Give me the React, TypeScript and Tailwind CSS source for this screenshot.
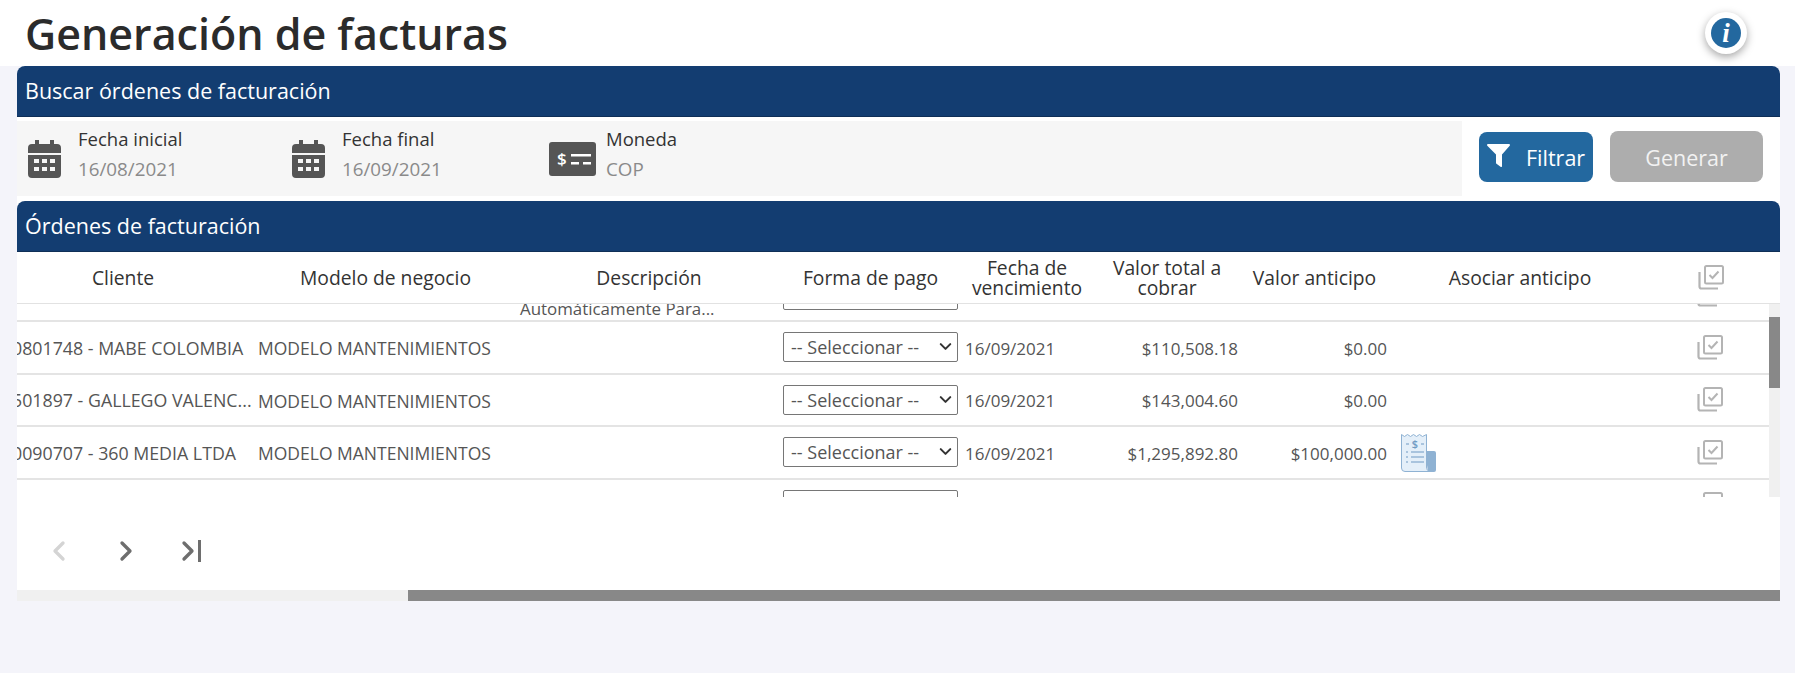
import React from 'react';
import { ChevronDown, ChevronLeft, ChevronRight } from 'lucide-react';

const gridCols = 'grid grid-cols-[235px_263px_268px_175px_138px_142px_149px_266px_116px]';

interface Row {
  client: string;
  model: string;
  description?: string;
  total: string;
  advance: string;
  hasReceipt?: boolean;
}

const rows: Row[] = [
  { client: '', model: '', description: 'Automáticamente Para...', total: '', advance: '' },
  { client: '0801748 - MABE COLOMBIA', model: 'MODELO MANTENIMIENTOS', total: '$110,508.18', advance: '$0.00' },
  { client: '501897 - GALLEGO VALENC...', model: 'MODELO MANTENIMIENTOS', total: '$143,004.60', advance: '$0.00' },
  { client: '0090707 - 360 MEDIA LTDA', model: 'MODELO MANTENIMIENTOS', total: '$1,295,892.80', advance: '$100,000.00', hasReceipt: true },
  { client: '', model: '', total: '', advance: '' },
];

const CalendarIcon = () => (
  <svg width="33" height="38" viewBox="0 0 33 38" className="shrink-0">
    <path fill="#555" d="M7 0h4v4h11V0h4v4h3a4 4 0 0 1 4 4v5H0V8a4 4 0 0 1 4-4h3z" />
    <path
      fill="#555"
      fillRule="evenodd"
      d="M0 15h33v19a4 4 0 0 1-4 4H4a4 4 0 0 1-4-4zM6 19v4h5v-4zm8 0v4h5v-4zm8 0v4h5v-4zM6 27v4h5v-4zm8 0v4h5v-4zm8 0v4h5v-4z"
    />
  </svg>
);

const MoneyIcon = () => (
  <svg width="47" height="34" viewBox="0 0 47 34" className="shrink-0">
    <rect width="47" height="34" rx="3" fill="#555" />
    <text x="8" y="23" fontSize="17" fontWeight="600" fill="#fff" fontFamily="'Open Sans', sans-serif">
      $
    </text>
    <rect x="22" y="12" width="20" height="2.5" fill="#fff" />
    <rect x="22" y="20" width="8" height="2.5" fill="#fff" />
    <rect x="34" y="20" width="8" height="2.5" fill="#fff" />
  </svg>
);

const FilterIcon = () => (
  <svg width="23" height="23" viewBox="0 0 23 23" className="shrink-0 -mt-[2px]">
    <path fill="#fff" d="M1 0h21a1 1 0 0 1 .7 1.7L15 10.5V22a1 1 0 0 1-1.5.8l-4-3a1 1 0 0 1-.5-.8v-8.5L.3 1.7A1 1 0 0 1 1 0z" />
  </svg>
);

const MultiCheckIcon = () => (
  <svg width="26" height="25" viewBox="0 0 26 25" fill="none" stroke="#b4b4b4" className="block">
    <rect x="7" y="1" width="18" height="17.5" rx="1.5" strokeWidth="2" />
    <path d="M11.5 10l3 3 6-6.5" strokeWidth="2" />
    <path d="M1.5 7v14.5a2 2 0 0 0 2 2H20" strokeWidth="2.2" />
  </svg>
);

const ReceiptIcon = () => (
  <svg width="35" height="39" viewBox="0 0 35 39" className="block">
    <path fill="#8fb2d3" d="M24 18h9a2 2 0 0 1 2 2v17a2 2 0 0 1-2 2h-6z" />
    <path
      fill="#e4eff9"
      stroke="#8fb2d3"
      strokeWidth="1"
      d="M.5 1.5l3 2 3-2 3 2 3-2 3 2 3-2 3 2 4-2V34c0 2 1 4 3 4.5H4a3.5 3.5 0 0 1-3.5-3.5z"
    />
    <text x="14" y="15" textAnchor="middle" fontSize="11" fontWeight="600" fill="#6f9ac3" fontFamily="'Open Sans', sans-serif">
      $
    </text>
    <path stroke="#6f9ac3" strokeWidth="1.2" d="M5 11h3M20 11h3M10 19h13M10 24h13M10 29h13" />
    <path stroke="#6f9ac3" strokeWidth="1.2" d="M5 19h2M5 24h2M5 29h2" />
  </svg>
);

const SectionBar = ({ title }: { title: string }) => (
  <div className="h-[51px] flex items-center px-2 bg-[#133d71] rounded-t-lg text-white text-[21.5px] border-b border-[#0f2f57]">
    {title}
  </div>
);

const FilterField = ({ icon, label, value, className }: { icon: React.ReactNode; label: string; value: string; className: string }) => (
  <div className={`flex items-center ${className}`}>
    {icon}
    <div className="flex flex-col leading-[30px] pb-[9px]">
      <span className="text-[18.5px] text-[#333]">{label}</span>
      <span className="text-[18.8px] text-[#8a8a8a]">{value}</span>
    </div>
  </div>
);

const HeaderCell = ({ children, className = '' }: { children: React.ReactNode; className?: string }) => (
  <div className={`flex items-center justify-center text-center text-[19.3px] leading-[20px] font-medium text-[#333] ${className}`}>{children}</div>
);

const App = () => {
  return (
    <div className="h-[673px] overflow-hidden bg-[#f4f4fa] text-[17.5px] font-['Open_Sans',sans-serif]">
      <header className="h-[66px] bg-white flex items-center justify-between pl-[25px] pr-[48px]">
        <h1 className="text-[43px] font-semibold text-[#2b2b2b] leading-none">Generación de facturas</h1>
        <button className="w-[42px] h-[42px] rounded-full bg-white shadow-[0_3px_8px_rgba(0,0,0,0.35)] flex items-center justify-center">
          <span className="w-[30px] h-[30px] rounded-full bg-[#23689f] flex items-center justify-center text-white text-[27px] font-bold italic font-['Liberation_Serif',serif] leading-none">
            i
          </span>
        </button>
      </header>

      <main className="mx-[17px] w-[1763px] bg-white rounded-t-lg">
        <SectionBar title="Buscar órdenes de facturación" />
        <div className="h-[79px] flex">
          <div className="w-[1445px] h-[75px] mt-[4px] bg-[#f6f6f6] flex items-center pl-[11px]">
            <FilterField icon={<CalendarIcon />} label="Fecha inicial" value="16/08/2021" className="w-[264px] gap-[17px]" />
            <FilterField icon={<CalendarIcon />} label="Fecha final" value="16/09/2021" className="w-[257px] gap-[17px]" />
            <FilterField icon={<MoneyIcon />} label="Moneda" value="COP" className="w-[200px] gap-[10px]" />
          </div>
          <div className="flex items-center pl-[17px] gap-[17px]">
            <button className="w-[114px] h-[50px] rounded-lg bg-[#23689f] text-white text-[21.5px] flex items-center pl-[8px] gap-[16px]">
              <FilterIcon />
              <span className="pt-[3px]">Filtrar</span>
            </button>
            <button className="w-[153px] h-[51px] pt-[3px] rounded-lg bg-[#adadad] text-[#f2f2f2] text-[21.5px]">Generar</button>
          </div>
        </div>

        <div className="h-[5px]" />
        <SectionBar title="Órdenes de facturación" />

        <div className={`${gridCols} h-[52px] border-b border-[#e2e2e2] pr-[11px]`}>
          <HeaderCell className="pr-[23px]">Cliente</HeaderCell>
          <HeaderCell className="pl-[4px]">Modelo de negocio</HeaderCell>
          <HeaderCell>Descripción</HeaderCell>
          <HeaderCell>Forma de pago</HeaderCell>
          <HeaderCell>
            Fecha de
            <br />
            vencimiento
          </HeaderCell>
          <HeaderCell>
            Valor total a
            <br />
            cobrar
          </HeaderCell>
          <HeaderCell className="pl-[4px]">Valor anticipo</HeaderCell>
          <HeaderCell>Asociar anticipo</HeaderCell>
          <div className="flex items-center justify-center">
            <MultiCheckIcon />
          </div>
        </div>

        <div className="h-[193px] overflow-hidden flex">
          <div className="w-[1752px] shrink-0 -mt-[34.5px]">
            {rows.map((row, i) => (
              <div key={i} className={`${gridCols} h-[52.5px] border-b-2 border-[#e4e4e4] items-center text-[#555]`}>
                <div className="overflow-hidden whitespace-nowrap pt-[2px] text-[17.8px]">
                  <span className="block -ml-[5px]">{row.client}</span>
                </div>
                <div className="pl-[6px] pt-[2px] whitespace-nowrap">{row.model}</div>
                <div className="self-end -mb-[1px] pl-[5px] text-[16.9px] whitespace-nowrap">{row.description}</div>
                <div className="relative h-[30px]">
                  <select className="w-full h-full appearance-none border border-[#767676] rounded-[2px] pl-[7px] pt-[1px] bg-white text-[18px] text-[#555]">
                    <option>-- Seleccionar --</option>
                  </select>
                  <ChevronDown size={19} strokeWidth={2.6} className="absolute right-[3px] top-[5px] text-[#333] pointer-events-none" />
                </div>
                <div className="pl-[7px] pt-[2px] text-[17px]">{i === 0 || i === 4 ? '' : '16/09/2021'}</div>
                <div className="text-right pt-[2px] text-[17px]">{row.total}</div>
                <div className="text-right pt-[2px] text-[17px]">{row.advance}</div>
                <div className="pl-[14px]">{row.hasReceipt && <ReceiptIcon />}</div>
                <div className="flex justify-center pr-[2px]">
                  <MultiCheckIcon />
                </div>
              </div>
            ))}
          </div>
          <div className="flex-1 bg-[#f0f0f0]">
            <div className="h-[71px] mt-[13px] bg-[#888]" />
          </div>
        </div>

        <div className="h-[93px] flex items-center pt-[14px] pl-[26px] gap-[35px]">
          <ChevronLeft size={32} strokeWidth={2.5} className="text-[#d4d4d4]" />
          <ChevronRight size={32} strokeWidth={2.5} className="text-[#6e6e6e]" />
          <div className="flex items-center -ml-[5px]">
            <ChevronRight size={32} strokeWidth={2.5} className="text-[#6e6e6e]" />
            <span className="w-[3px] h-[22px] bg-[#6e6e6e] -ml-[6px]" />
          </div>
        </div>

        <div className="h-[11px] bg-[#f0f0f0] pl-[391px]">
          <div className="h-full bg-[#888]" />
        </div>
      </main>
    </div>
  );
};

export default App;
